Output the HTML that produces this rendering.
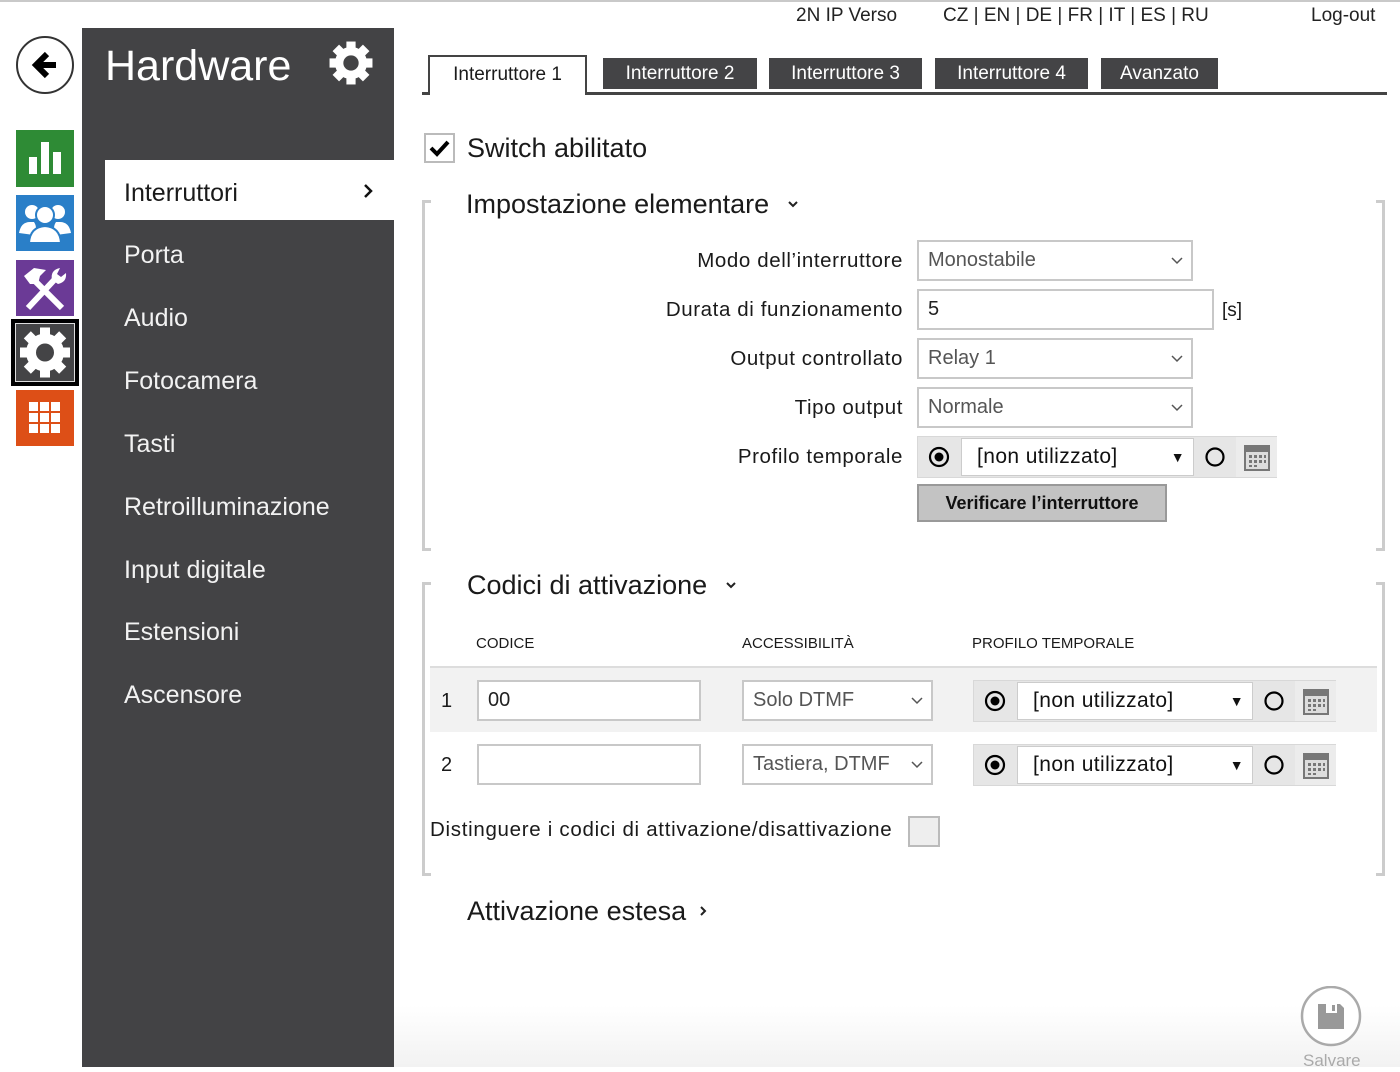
<!DOCTYPE html>
<html><head><meta charset="utf-8"><style>
*{box-sizing:border-box;margin:0;padding:0}
body{width:1400px;height:1067px;position:relative;overflow:hidden;background:#fff;font-family:"Liberation Sans",sans-serif;color:#1a1a1a}
.a{position:absolute;white-space:nowrap}
.menu{position:absolute;left:124px;color:#f2f2f2;font-size:25px;line-height:34px}
.lbl{position:absolute;right:497px;font-size:20.5px;letter-spacing:0.6px;line-height:24px;text-align:right}
.sel{position:absolute;border:2px solid #c8c8c8;background:#fff;font-size:20px;color:#555;padding-left:9px}
.chev{position:absolute;right:8px;top:50%;margin-top:-4px}
.tab{position:absolute;top:58px;height:31px;background:#444446;color:#fff;font-size:19px;line-height:31px;text-align:center}
.prof{position:absolute;height:42px;background:#e6e6e6;border:1px solid #d8d8d8}
.prof .r{position:absolute;left:0;top:0;width:43px;height:40px}
.prof .s{position:absolute;left:43px;top:1px;width:233px;height:38px;background:#fff;border:1px solid #ccc;font-size:21px;letter-spacing:0.4px;line-height:36px;padding-left:15px;color:#111}
.prof .c{position:absolute;left:276px;top:0;width:42px;height:40px}
.prof .k{position:absolute;left:318px;top:0;width:41px;height:40px;background:#ececec}
</style></head><body>
<div class="a" style="left:0;top:0;width:1400px;height:2px;background:#c9c9c9"></div>
<svg class="a" style="left:15px;top:35px" width="62" height="62"><circle cx="30" cy="30" r="28" fill="#fff" stroke="#333" stroke-width="2"/><path d="M32 19 L21 30 L32 41 M22 30 H41" stroke="#000" stroke-width="6" fill="none"/></svg>
<div class="a" style="left:16px;top:130px;width:58px;height:57px;background:#2e8b35"></div>
<svg class="a" style="left:16px;top:130px" width="58" height="57"><rect x="13" y="27" width="8" height="17" fill="#fff"/><rect x="25" y="12" width="8" height="32" fill="#fff"/><rect x="37" y="22" width="8" height="22" fill="#fff"/></svg>
<div class="a" style="left:16px;top:195px;width:58px;height:56px;background:#2a7fc8"></div>
<svg class="a" style="left:16px;top:195px" width="58" height="56" fill="#fff"><circle cx="16" cy="17" r="7"/><circle cx="42" cy="17" r="7"/><path d="M3 38 Q5 27 14 27 L18 27 Q22 33 18 40 Z M55 38 Q53 27 44 27 L40 27 Q36 33 40 40 Z"/><circle cx="29" cy="20" r="9" stroke="#2a7fc8" stroke-width="2"/><path d="M13 48 Q14 32 29 31 Q44 32 45 48 Z" stroke="#2a7fc8" stroke-width="2"/></svg>
<div class="a" style="left:16px;top:260px;width:58px;height:56px;background:#6b3a96"></div>
<svg class="a" style="left:16px;top:260px" width="58" height="56"><path d="M12 48 L40 18 M46 48 L18 20" stroke="#fff" stroke-width="6"/><path d="M8 16 L18 8 L30 10 L24 16 L22 24 L14 24 Z" fill="#fff"/><path d="M36 20 Q34 10 44 8 L41 14 L45 17 L50 13 Q51 22 42 24 Z" fill="#fff"/></svg>
<div class="a" style="left:11px;top:319px;width:68px;height:67px;background:#000"></div>
<div class="a" style="left:15px;top:323px;width:60px;height:59px;background:#444446;border:1px solid #ddd"></div>
<svg class="a" style="left:15px;top:323px" width="60" height="59" viewBox="0 0 60 59"><g transform="translate(30,29.5)" fill="#fff"><rect x="-5" y="-25" width="10" height="50"/><rect x="-5" y="-25" width="10" height="50" transform="rotate(45)"/><rect x="-5" y="-25" width="10" height="50" transform="rotate(90)"/><rect x="-5" y="-25" width="10" height="50" transform="rotate(135)"/><circle r="19"/><circle r="9" fill="#444446"/></g></svg>
<div class="a" style="left:16px;top:390px;width:58px;height:56px;background:#dd4f17"></div>
<svg class="a" style="left:16px;top:390px" width="58" height="56" fill="#fff"><rect x="13" y="12" width="9" height="9"/><rect x="24" y="12" width="9" height="9"/><rect x="35" y="12" width="9" height="9"/><rect x="13" y="23" width="9" height="9"/><rect x="24" y="23" width="9" height="9"/><rect x="35" y="23" width="9" height="9"/><rect x="13" y="34" width="9" height="9"/><rect x="24" y="34" width="9" height="9"/><rect x="35" y="34" width="9" height="9"/></svg>
<div class="a" style="left:82px;top:28px;width:312px;height:1039px;background:#434345"></div>
<div class="a" style="left:105px;top:38px;color:#fff;font-size:43px;line-height:56px">Hardware</div>
<svg class="a" style="left:328px;top:40px" width="46" height="46" viewBox="0 0 60 60"><g transform="translate(30,30)" fill="#fff"><rect x="-6" y="-28" width="12" height="56"/><rect x="-6" y="-28" width="12" height="56" transform="rotate(45)"/><rect x="-6" y="-28" width="12" height="56" transform="rotate(90)"/><rect x="-6" y="-28" width="12" height="56" transform="rotate(135)"/><circle r="21"/><circle r="10" fill="#434345"/></g></svg>
<div class="a" style="left:105px;top:160px;width:289px;height:60px;background:#fff"></div>
<div class="menu" style="top:176px;color:#1a1a1a">Interruttori</div>
<svg class="a" style="left:362px;top:183px" width="12" height="16"><path d="M3 2 L9 8 L3 14" stroke="#111" stroke-width="2.5" fill="none"/></svg>
<div class="menu" style="top:238px">Porta</div>
<div class="menu" style="top:301px">Audio</div>
<div class="menu" style="top:364px">Fotocamera</div>
<div class="menu" style="top:427px">Tasti</div>
<div class="menu" style="top:490px">Retroilluminazione</div>
<div class="menu" style="top:553px">Input digitale</div>
<div class="menu" style="top:615px">Estensioni</div>
<div class="menu" style="top:678px">Ascensore</div>
<div class="a" style="left:796px;top:4px;font-size:19px;line-height:24px;color:#222">2N IP Verso</div>
<div class="a" style="left:943px;top:4px;font-size:19px;line-height:24px;color:#222">CZ | EN | DE | FR | IT | ES | RU</div>
<div class="a" style="left:1311px;top:4px;font-size:19px;line-height:24px;color:#222">Log-out</div>
<div class="a" style="left:422px;top:92px;width:965px;height:3px;background:#444"></div>
<div class="a" style="left:428px;top:55px;width:159px;height:40px;background:#fff;border:2px solid #444;border-bottom:none"></div>
<div class="a" style="left:430px;top:60px;width:155px;font-size:19px;line-height:30px;text-align:center">Interruttore 1</div>
<div class="tab" style="left:603px;width:154px">Interruttore 2</div>
<div class="tab" style="left:769px;width:153px">Interruttore 3</div>
<div class="tab" style="left:935px;width:153px">Interruttore 4</div>
<div class="tab" style="left:1101px;width:117px">Avanzato</div>
<div class="a" style="left:424px;top:133px;width:31px;height:30px;border:2px solid #bbb;background:#fff"></div>
<svg class="a" style="left:424px;top:133px" width="31" height="30"><path d="M7 15 L13 21 L24 9" stroke="#000" stroke-width="4" fill="none"/></svg>
<div class="a" style="left:467px;top:131px;font-size:27px;line-height:34px">Switch abilitato</div>
<div class="a" style="left:422px;top:200px;width:3px;height:351px;background:#ccc"></div>
<div class="a" style="left:422px;top:200px;width:9px;height:3px;background:#ccc"></div>
<div class="a" style="left:422px;top:548px;width:9px;height:3px;background:#ccc"></div>
<div class="a" style="left:1382px;top:200px;width:3px;height:351px;background:#ccc"></div>
<div class="a" style="left:1376px;top:200px;width:9px;height:3px;background:#ccc"></div>
<div class="a" style="left:1376px;top:548px;width:9px;height:3px;background:#ccc"></div>
<div class="a" style="left:422px;top:582px;width:3px;height:294px;background:#ccc"></div>
<div class="a" style="left:422px;top:582px;width:9px;height:3px;background:#ccc"></div>
<div class="a" style="left:422px;top:873px;width:9px;height:3px;background:#ccc"></div>
<div class="a" style="left:1382px;top:582px;width:3px;height:294px;background:#ccc"></div>
<div class="a" style="left:1376px;top:582px;width:9px;height:3px;background:#ccc"></div>
<div class="a" style="left:1376px;top:873px;width:9px;height:3px;background:#ccc"></div>
<div class="a" style="left:466px;top:187px;font-size:27px;line-height:34px">Impostazione elementare</div>
<svg class="a" style="left:787px;top:199px" width="12" height="10"><path d="M2 3 L6 7 L10 3" stroke="#222" stroke-width="2" fill="none"/></svg>
<div class="lbl" style="top:249px">Modo dell’interruttore</div>
<div class="sel" style="left:917px;top:240px;width:276px;height:41px;line-height:37px">Monostabile<svg class="chev" width="12" height="8"><path d="M1 1 L6 6 L11 1" stroke="#555" stroke-width="1.5" fill="none"/></svg></div>
<div class="lbl" style="top:298px">Durata di funzionamento</div>
<div class="sel" style="left:917px;top:289px;width:297px;height:41px;line-height:37px;color:#222">5</div>
<div class="a" style="left:1222px;top:299px;font-size:19px;line-height:24px">[s]</div>
<div class="lbl" style="top:347px">Output controllato</div>
<div class="sel" style="left:917px;top:338px;width:276px;height:41px;line-height:37px">Relay 1<svg class="chev" width="12" height="8"><path d="M1 1 L6 6 L11 1" stroke="#555" stroke-width="1.5" fill="none"/></svg></div>
<div class="lbl" style="top:396px">Tipo output</div>
<div class="sel" style="left:917px;top:387px;width:276px;height:41px;line-height:37px">Normale<svg class="chev" width="12" height="8"><path d="M1 1 L6 6 L11 1" stroke="#555" stroke-width="1.5" fill="none"/></svg></div>
<div class="lbl" style="top:445px">Profilo temporale</div>
<div class="prof" style="left:917px;top:436px;width:360px">
<svg class="r" width="43" height="40"><circle cx="21" cy="20" r="9" fill="none" stroke="#000" stroke-width="2.2"/><circle cx="21" cy="20" r="4.5" fill="#000"/></svg>
<div class="s">[non utilizzato]<span style="position:absolute;right:8px;font-size:14px">&#9660;</span></div>
<svg class="c" width="42" height="40"><circle cx="21" cy="20" r="8.5" fill="none" stroke="#000" stroke-width="2.2"/></svg>
<svg class="k" width="41" height="40"><rect x="9" y="9" width="24" height="24" fill="#ddd" stroke="#777" stroke-width="2"/><rect x="9" y="9" width="24" height="6" fill="#777"/><g fill="#777"><rect x="13" y="18" width="3" height="3"/><rect x="18" y="18" width="3" height="3"/><rect x="23" y="18" width="3" height="3"/><rect x="28" y="18" width="2" height="3"/><rect x="13" y="23" width="3" height="3"/><rect x="18" y="23" width="3" height="3"/><rect x="23" y="23" width="3" height="3"/><rect x="28" y="23" width="2" height="3"/><rect x="13" y="28" width="3" height="2"/><rect x="18" y="28" width="3" height="2"/></g></svg>
</div>
<div class="a" style="left:917px;top:484px;width:250px;height:38px;background:#c3c3c3;border:2px solid #999;font-weight:bold;font-size:18px;line-height:34px;text-align:center;color:#111">Verificare l’interruttore</div>
<div class="a" style="left:467px;top:568px;font-size:27px;line-height:34px">Codici di attivazione</div>
<svg class="a" style="left:725px;top:580px" width="12" height="10"><path d="M2 3 L6 7 L10 3" stroke="#222" stroke-width="2" fill="none"/></svg>
<div class="a" style="left:476px;top:635px;font-size:15px;line-height:18px">CODICE</div>
<div class="a" style="left:742px;top:635px;font-size:15px;line-height:18px">ACCESSIBILITÀ</div>
<div class="a" style="left:972px;top:635px;font-size:15px;line-height:18px">PROFILO TEMPORALE</div>
<div class="a" style="left:430px;top:666px;width:947px;height:2px;background:#ddd"></div>
<div class="a" style="left:430px;top:668px;width:947px;height:64px;background:#f2f2f2"></div>
<div class="a" style="left:441px;top:689px;font-size:20px;line-height:24px">1</div>
<div class="sel" style="left:477px;top:680px;width:224px;height:41px;line-height:37px;color:#222">00</div>
<div class="sel" style="left:742px;top:680px;width:191px;height:41px;line-height:37px">Solo DTMF<svg class="chev" width="12" height="8"><path d="M1 1 L6 6 L11 1" stroke="#555" stroke-width="1.5" fill="none"/></svg></div>
<div class="prof" style="left:973px;top:680px;width:363px">
<svg class="r" width="43" height="40"><circle cx="21" cy="20" r="9" fill="none" stroke="#000" stroke-width="2.2"/><circle cx="21" cy="20" r="4.5" fill="#000"/></svg>
<div class="s" style="width:236px">[non utilizzato]<span style="position:absolute;right:8px;font-size:14px">&#9660;</span></div>
<svg class="c" style="left:279px" width="42" height="40"><circle cx="21" cy="20" r="8.5" fill="none" stroke="#000" stroke-width="2.2"/></svg>
<svg class="k" style="left:321px" width="41" height="40"><rect x="9" y="9" width="24" height="24" fill="#ddd" stroke="#777" stroke-width="2"/><rect x="9" y="9" width="24" height="6" fill="#777"/><g fill="#777"><rect x="13" y="18" width="3" height="3"/><rect x="18" y="18" width="3" height="3"/><rect x="23" y="18" width="3" height="3"/><rect x="28" y="18" width="2" height="3"/><rect x="13" y="23" width="3" height="3"/><rect x="18" y="23" width="3" height="3"/><rect x="23" y="23" width="3" height="3"/><rect x="28" y="23" width="2" height="3"/><rect x="13" y="28" width="3" height="2"/><rect x="18" y="28" width="3" height="2"/></g></svg>
</div>
<div class="a" style="left:441px;top:753px;font-size:20px;line-height:24px">2</div>
<div class="sel" style="left:477px;top:744px;width:224px;height:41px"></div>
<div class="sel" style="left:742px;top:744px;width:191px;height:41px;line-height:37px">Tastiera, DTMF<svg class="chev" width="12" height="8"><path d="M1 1 L6 6 L11 1" stroke="#555" stroke-width="1.5" fill="none"/></svg></div>
<div class="prof" style="left:973px;top:744px;width:363px">
<svg class="r" width="43" height="40"><circle cx="21" cy="20" r="9" fill="none" stroke="#000" stroke-width="2.2"/><circle cx="21" cy="20" r="4.5" fill="#000"/></svg>
<div class="s" style="width:236px">[non utilizzato]<span style="position:absolute;right:8px;font-size:14px">&#9660;</span></div>
<svg class="c" style="left:279px" width="42" height="40"><circle cx="21" cy="20" r="8.5" fill="none" stroke="#000" stroke-width="2.2"/></svg>
<svg class="k" style="left:321px" width="41" height="40"><rect x="9" y="9" width="24" height="24" fill="#ddd" stroke="#777" stroke-width="2"/><rect x="9" y="9" width="24" height="6" fill="#777"/><g fill="#777"><rect x="13" y="18" width="3" height="3"/><rect x="18" y="18" width="3" height="3"/><rect x="23" y="18" width="3" height="3"/><rect x="28" y="18" width="2" height="3"/><rect x="13" y="23" width="3" height="3"/><rect x="18" y="23" width="3" height="3"/><rect x="23" y="23" width="3" height="3"/><rect x="28" y="23" width="2" height="3"/><rect x="13" y="28" width="3" height="2"/><rect x="18" y="28" width="3" height="2"/></g></svg>
</div>
<div class="a" style="left:430px;top:818px;font-size:20.5px;letter-spacing:0.7px;line-height:24px">Distinguere i codici di attivazione/disattivazione</div>
<div class="a" style="left:908px;top:816px;width:32px;height:31px;border:2px solid #bbb;background:#eee"></div>
<div class="a" style="left:467px;top:894px;font-size:27px;line-height:34px">Attivazione estesa</div>
<svg class="a" style="left:698px;top:904px" width="10" height="14"><path d="M3 3 L7 7 L3 11" stroke="#222" stroke-width="2" fill="none"/></svg>
<div class="a" style="left:394px;top:1005px;width:1006px;height:62px;background:linear-gradient(#fff,#f2f2f2)"></div>
<svg class="a" style="left:1300px;top:986px" width="62" height="62"><circle cx="31" cy="30" r="29" fill="#fff" stroke="#aaa" stroke-width="2.5"/><path d="M18 18 H40 L44 22 V43 H18 Z" fill="#999"/><rect x="26" y="18" width="11" height="9" fill="#fff"/><rect x="32" y="19" width="3" height="6" fill="#999"/></svg>
<div class="a" style="left:1303px;top:1050px;font-size:17px;line-height:22px;color:#aaa">Salvare</div>
</body></html>
